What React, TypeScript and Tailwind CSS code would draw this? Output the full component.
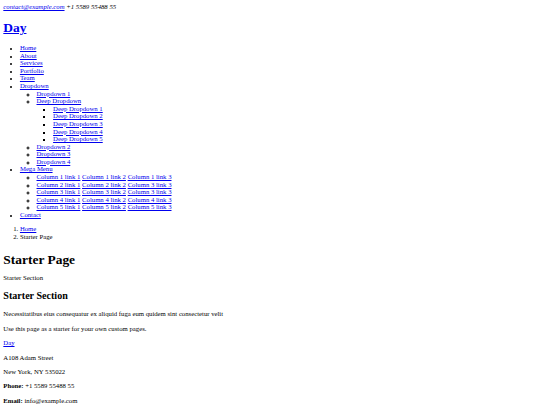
import React from 'react';

const linkCls = 'text-[#0000ee] underline';

const navTop = ['Home', 'About', 'Services', 'Portfolio', 'Team'];
const deepItems = [1, 2, 3, 4, 5].map((n) => `Deep Dropdown ${n}`);
const megaRows = [
  ['Column 1 link 1', 'Column 1 link 2', 'Column 1 link 3'],
  ['Column 2 link 1', 'Column 2 link 2', 'Column 3 link 3'],
  ['Column 3 link 1', 'Column 3 link 2', 'Column 3 link 3'],
  ['Column 4 link 1', 'Column 4 link 2', 'Column 4 link 3'],
  ['Column 5 link 1', 'Column 5 link 2', 'Column 5 link 3'],
];

const A = ({ children }: { children: React.ReactNode }) => (
  <a href="#" className={linkCls}>
    {children}
  </a>
);

export default function App() {
  return (
    <div className="p-[3.32px] font-['Liberation_Serif',serif] text-[6.72px] leading-[7.6px] text-black bg-white min-h-screen">
      {/* Top bar */}
      <div className="italic">
        <a href="#" className={linkCls}>contact@example.com</a> <span>+1 5589 55488 55</span>
      </div>

      {/* Header */}
      <h1 className="text-[13.44px] leading-[15.3px] font-bold my-[8.9px]">
        <A>Day</A>
      </h1>

      <nav>
        <ul className="[list-style-type:disc] marker:text-[5.5px] pl-[16.6px] my-[6.64px]">
          {navTop.map((item) => (
            <li key={item}>
              <A>{item}</A>
            </li>
          ))}
          <li>
            <A>Dropdown</A>
            <ul className="[list-style-type:circle] marker:text-[5.5px] pl-[16.6px]">
              <li>
                <A>Dropdown 1</A>
              </li>
              <li>
                <A>Deep Dropdown</A>
                <ul className="[list-style-type:square] marker:text-[5.5px] pl-[16.6px]">
                  {deepItems.map((d) => (
                    <li key={d}>
                      <A>{d}</A>
                    </li>
                  ))}
                </ul>
              </li>
              <li>
                <A>Dropdown 2</A>
              </li>
              <li>
                <A>Dropdown 3</A>
              </li>
              <li>
                <A>Dropdown 4</A>
              </li>
            </ul>
          </li>
          <li>
            <A>Mega Menu</A>
            <ul className="[list-style-type:circle] marker:text-[5.5px] pl-[16.6px]">
              {megaRows.map((row, i) => (
                <li key={i}>
                  <A>{row[0]}</A> <A>{row[1]}</A> <A>{row[2]}</A>
                </li>
              ))}
            </ul>
          </li>
          <li>
            <A>Contact</A>
          </li>
        </ul>
      </nav>

      {/* Breadcrumbs */}
      <ol className="[list-style-type:decimal] pl-[16.6px] my-[6.64px]">
        <li>
          <A>Home</A>
        </li>
        <li>Starter Page</li>
      </ol>

      <h1 className="text-[13.44px] leading-[15.3px] font-bold mt-[11.8px] mb-[6.6px]">Starter Page</h1>

      <p className="my-[6.85px]">Starter Section</p>

      <h2 className="text-[10.08px] leading-[11.45px] font-bold my-[8.4px]">Starter Section</h2>
      <p className="my-[6.85px]">Necessitatibus eius consequatur ex aliquid fuga eum quidem sint consectetur velit</p>
      <p className="my-[6.85px]">Use this page as a starter for your own custom pages.</p>

      {/* Footer */}
      <footer>
        <A>Day</A>
        <p className="my-[6.85px]">A108 Adam Street</p>
        <p className="my-[6.85px]">New York, NY 535022</p>
        <p className="my-[6.85px]">
          <strong className="font-bold">Phone:</strong> <span>+1 5589 55488 55</span>
        </p>
        <p className="my-[6.85px]">
          <strong className="font-bold">Email:</strong> <span>info@example.com</span>
        </p>
      </footer>
    </div>
  );
}
